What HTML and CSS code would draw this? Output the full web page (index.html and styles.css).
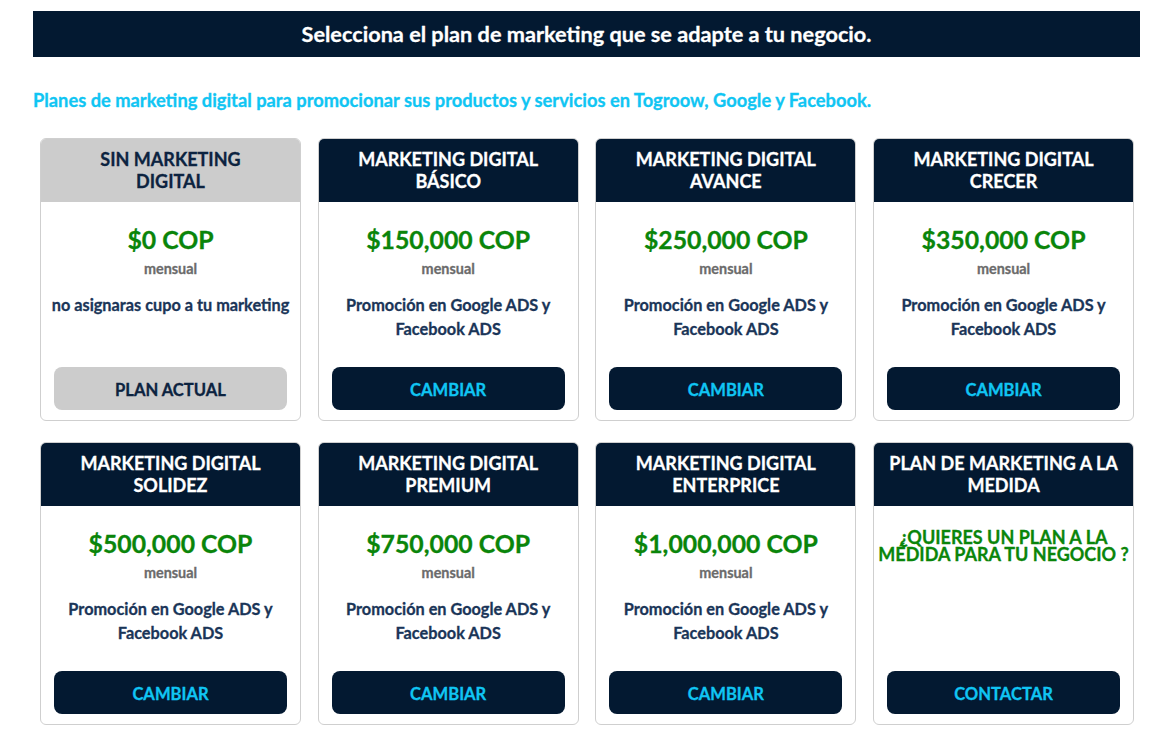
FILE: index.html
```html
<!DOCTYPE html>
<html lang="es">
<head>
  <meta charset="UTF-8" />
  <title>Planes de marketing</title>
  <link rel="stylesheet" href="styles.css">
</head>
<body>
  <div class="page">
    <h1 class="title-bar">Selecciona el plan de marketing que se adapte a tu negocio.</h1>
    <p class="subtitle">Planes de marketing digital para promocionar sus productos y servicios en Togroow, Google y Facebook.</p>

    <div class="plans">
      <div class="plan current">
        <div class="plan-head">Sin marketing<br>digital</div>
        <div class="plan-body">
          <div class="price">$0 COP</div>
          <div class="period">mensual</div>
          <div class="desc">no asignaras cupo a tu marketing</div>
          <a class="btn" href="#">Plan actual</a>
        </div>
      </div>
      <div class="plan">
        <div class="plan-head">Marketing digital<br>básico</div>
        <div class="plan-body">
          <div class="price">$150,000 COP</div>
          <div class="period">mensual</div>
          <div class="desc">Promoción en Google ADS y Facebook ADS</div>
          <a class="btn" href="#">Cambiar</a>
        </div>
      </div>
      <div class="plan">
        <div class="plan-head">Marketing digital<br>avance</div>
        <div class="plan-body">
          <div class="price">$250,000 COP</div>
          <div class="period">mensual</div>
          <div class="desc">Promoción en Google ADS y Facebook ADS</div>
          <a class="btn" href="#">Cambiar</a>
        </div>
      </div>
      <div class="plan">
        <div class="plan-head">Marketing digital<br>crecer</div>
        <div class="plan-body">
          <div class="price">$350,000 COP</div>
          <div class="period">mensual</div>
          <div class="desc">Promoción en Google ADS y Facebook ADS</div>
          <a class="btn" href="#">Cambiar</a>
        </div>
      </div>
      <div class="plan">
        <div class="plan-head">Marketing digital<br>solidez</div>
        <div class="plan-body">
          <div class="price">$500,000 COP</div>
          <div class="period">mensual</div>
          <div class="desc">Promoción en Google ADS y Facebook ADS</div>
          <a class="btn" href="#">Cambiar</a>
        </div>
      </div>
      <div class="plan">
        <div class="plan-head">Marketing digital<br>premium</div>
        <div class="plan-body">
          <div class="price">$750,000 COP</div>
          <div class="period">mensual</div>
          <div class="desc">Promoción en Google ADS y Facebook ADS</div>
          <a class="btn" href="#">Cambiar</a>
        </div>
      </div>
      <div class="plan">
        <div class="plan-head">Marketing digital<br>enterprice</div>
        <div class="plan-body">
          <div class="price">$1,000,000 COP</div>
          <div class="period">mensual</div>
          <div class="desc">Promoción en Google ADS y Facebook ADS</div>
          <a class="btn" href="#">Cambiar</a>
        </div>
      </div>
      <div class="plan">
        <div class="plan-head">Plan de marketing a la<br>medida</div>
        <div class="plan-body">
          <div class="custom">¿Quieres un plan a la médida para tu negocio ?</div>
          <a class="btn" href="#">Contactar</a>
        </div>
      </div>
    </div>
  </div>
</body>
</html>
```

FILE: styles.css
```css
html, body, div, h1, p {
  padding: 0; margin: 0;
}
a {
  color: inherit;
  text-decoration: inherit;
}

body {
  font-family: Lato, "Open Sans", sans-serif;
  font-weight: 700;
  background: #fff;
  -webkit-text-stroke: 0.3px currentColor;
}

.page {
  width: 1107px;
  margin: 11px 0 0 33px;
}

.title-bar {
  height: 46px;
  line-height: 46px;
  background-color: #031931;
  color: #fff;
  font-size: 21.7px;
  font-weight: 700;
  text-align: center;
}

.subtitle {
  margin-top: 33px;
  color: #10c5f3;
  font-size: 18.3px;
  line-height: 20px;
}

.plans {
  display: grid;
  grid-template-columns: repeat(4, 261px);
  column-gap: 16.7px;
  row-gap: 21px;
  margin: 28px 0 0 7px;
}

.plan {
  height: 283px;
  border: 1px solid #cfcfcf;
  border-radius: 6px;
  overflow: hidden;
  display: flex;
  flex-direction: column;
  box-sizing: border-box;
}

.plan-head {
  height: 64px;
  flex-shrink: 0;
  display: flex;
  align-items: center;
  justify-content: center;
  text-align: center;
  background-color: #031931;
  color: #fff;
  font-size: 18px;
  line-height: 22px;
  text-transform: uppercase;
  margin: -1px -1px 0;
}
.plan.current .plan-head {
  background-color: #cccccc;
  color: #0c2340;
}

.plan-body {
  flex: 1;
  display: flex;
  flex-direction: column;
  align-items: center;
  text-align: center;
  padding: 23px 13px 10px;
}

.price {
  font-size: 24.8px;
  line-height: 30px;
  color: #0a850a;
}
.period {
  margin-top: 5px;
  font-size: 14.4px;
  line-height: 18px;
  color: #6b6b6b;
}
.desc {
  margin: 15px -10px 0;
  font-size: 16.3px;
  line-height: 24px;
  color: #1a3558;
}
.custom {
  margin: 0 -10px;
  font-size: 18px;
  line-height: 16.5px;
  color: #0a850a;
  text-transform: uppercase;
}

.btn {
  margin-top: auto;
  width: 100%;
  height: 43px;
  line-height: 46px;
  border-radius: 8px;
  background-color: #031931;
  color: #10c5f3;
  font-size: 16.6px;
  text-transform: uppercase;
}
.plan.current .btn {
  background-color: #cccccc;
  color: #0c2340;
}
```
